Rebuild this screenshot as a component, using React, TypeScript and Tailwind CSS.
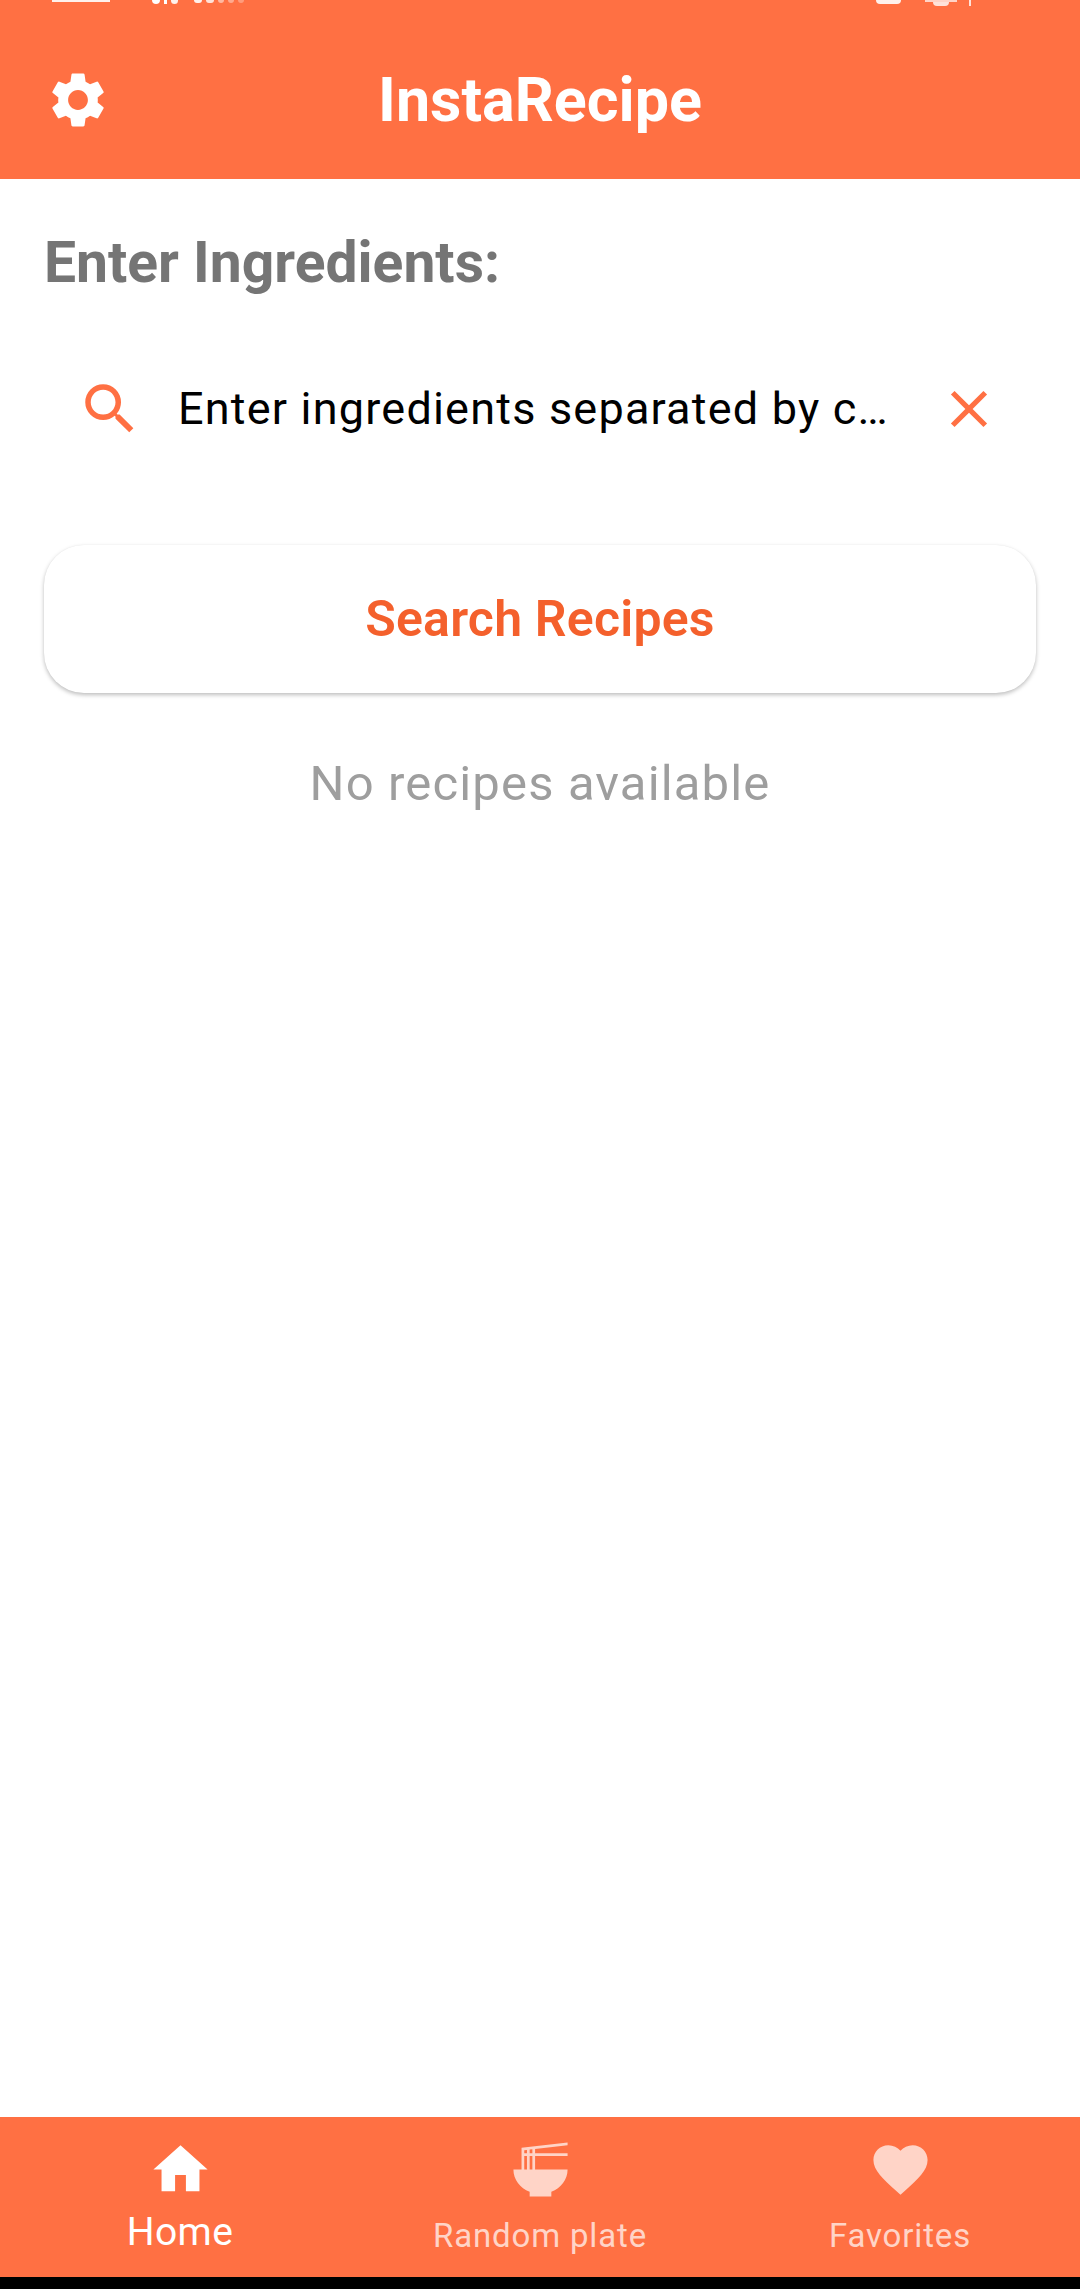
import React from 'react';
import { MdSettings, MdSearch, MdClose, MdHome, MdRamenDining, MdFavorite } from 'react-icons/md';

const NavItem: React.FC<{ icon: React.ReactNode; label: string; active?: boolean }> = ({ icon, label, active }) => (
  <div className={`flex flex-col items-center ${active ? 'text-white' : 'text-[#ffd4c7]'}`}>
    {icon}
    <span
      className={
        active
          ? 'mt-[7px] text-[39px] leading-[46px] tracking-[0.4px]'
          : 'mt-[14px] text-[33px] leading-[40px] tracking-[0.85px]'
      }
    >
      {label}
    </span>
  </div>
);

const App: React.FC = () => {
  return (
    <div className="flex flex-col h-[2289px] w-[1080px] overflow-hidden bg-white font-['Roboto',sans-serif]">
      <header className="relative h-[179px] shrink-0 bg-[#ff7043]">
        {/* status bar, mostly cut off by the top of the screenshot */}
        <div className="flex h-[6px] items-start justify-between pl-[52px] pr-[109px] overflow-hidden">
          <div className="flex">
            <div className="h-[2px] w-[58px] bg-[#fff1ec]" />
            <div className="ml-[42px] flex gap-[4px]">
              <div className="h-[4px] w-[8px] rounded-b-full bg-white" />
              <div className="h-[4px] w-[3px] bg-white" />
              <div className="h-[4px] w-[7px] rounded-b-full bg-white/90" />
            </div>
            <div className="ml-[16px] flex gap-[4px]">
              <div className="h-[3px] w-[8px] rounded-b-sm bg-white/90" />
              <div className="h-[3px] w-[8px] rounded-b-sm bg-white/80" />
              <div className="h-[3px] w-[6px] rounded-b-sm bg-white/50" />
              <div className="h-[3px] w-[6px] rounded-b-sm bg-white/40" />
              <div className="h-[3px] w-[6px] rounded-b-sm bg-white/30" />
            </div>
          </div>
          <div className="flex">
            <div className="h-[4px] w-[25px] rounded-b-full bg-[#fff1ec]" />
            <div className="ml-[24px] flex flex-col items-center">
              <div className="h-[2px] w-[32px] bg-white/70" />
              <div className="h-[4px] w-[16px] rounded-b-full bg-white/80" />
            </div>
            <div className="ml-[12px] h-[6px] w-[2px] bg-white/80" />
          </div>
        </div>
        <div className="flex h-[173px] items-center pl-[45px] pt-[15px]">
          <MdSettings className="w-[66px] h-[66px] shrink-0 text-white" />
        </div>
        <h1 className="absolute inset-x-0 top-[63px] text-center text-[61px] leading-[74px] font-bold text-white">
          InstaRecipe
        </h1>
      </header>

      <main className="flex flex-1 flex-col px-[44px]">
        <h2 className="mt-[49px] text-[57px] leading-[70px] font-bold text-[#757575]">Enter Ingredients:</h2>

        <div className="mt-[55px] flex h-[112px] items-center pl-[33px] pr-[36px]">
          <MdSearch className="w-[66px] h-[66px] shrink-0 text-[#ff7043]" />
          <span className="ml-[35px] flex-1 min-w-0 truncate text-[45px] leading-[56px] tracking-[1.2px] text-black">
            Enter ingredients separated by commas
          </span>
          <MdClose className="ml-[48px] w-[62px] h-[62px] shrink-0 text-[#ff7043]" />
        </div>

        <button className="mt-[80px] h-[148px] w-full shrink-0 rounded-[40px] bg-white text-[50px] tracking-[0.2px] font-semibold text-[#f4602c] shadow-[0_2px_4px_rgba(0,0,0,0.26),0_0_1px_rgba(0,0,0,0.05)]">
          Search Recipes
        </button>

        <p className="mt-[61px] text-center text-[49px] leading-[60px] tracking-[1.15px] text-[#9e9e9e]">
          No recipes available
        </p>
      </main>

      <nav className="grid h-[160px] shrink-0 grid-cols-3 bg-[#ff7043] pt-[20px]">
        <NavItem active label="Home" icon={<MdHome className="w-[65px] h-[65px]" />} />
        <NavItem label="Random plate" icon={<MdRamenDining className="w-[65px] h-[65px]" />} />
        <NavItem label="Favorites" icon={<MdFavorite className="w-[65px] h-[65px]" />} />
      </nav>
      <div className="h-[12px] shrink-0 bg-black" />
    </div>
  );
};

export default App;
